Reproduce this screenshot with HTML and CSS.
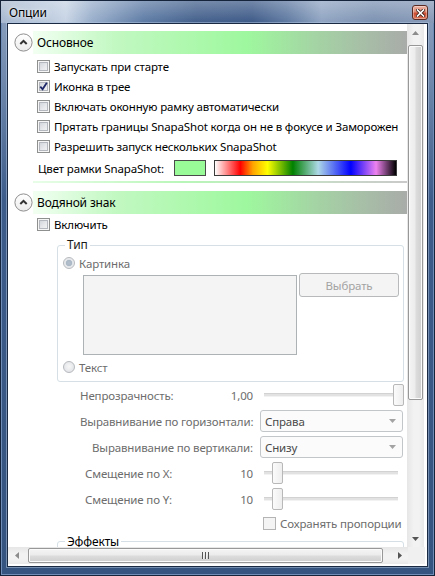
FILE: index.html
```html
<!DOCTYPE html>
<html>
<head>
<meta charset="utf-8">
<link rel="stylesheet" href="styles.css">
</head>
<body>
<div class="window">
  <div class="titlebar">
    <span class="title">Опции</span>
    <div class="close">
      <svg width="9" height="8" viewBox="0 0 9 8"><path d="M1.5 1L7.5 7M7.5 1L1.5 7" stroke="#3a1a14" stroke-width="3.2" stroke-linecap="square"/><path d="M1.5 1L7.5 7M7.5 1L1.5 7" stroke="#fff" stroke-width="1.7" stroke-linecap="square"/></svg>
    </div>
  </div>
  <div class="client">
    <div class="main">
      <div class="viewport">
        <div class="content">
          <div class="exp-header">
            <span class="toggle"><svg width="19" height="19" viewBox="0 0 19 19"><defs><linearGradient id="tg" x1="0" y1="0" x2="0" y2="1"><stop offset="0" stop-color="#ffffff"/><stop offset="1" stop-color="#ececec"/></linearGradient></defs><circle cx="9.5" cy="9.5" r="8.6" fill="url(#tg)" stroke="#8d8d8d" stroke-width="1"/><path d="M6.3 11L9.5 7.8L12.7 11" fill="none" stroke="#333" stroke-width="2"/></svg></span>
            <div class="band">Основное</div>
          </div>
          <div class="exp-body first">
            <div class="row"><span class="cb"></span><span>Запускать при старте</span></div>
            <div class="row"><span class="cb"><svg width="11" height="11" viewBox="0 0 11 11"><path d="M2.3 5.6L4.6 8.3L8.8 1.8" fill="none" stroke="#1f2868" stroke-width="1.8"/></svg></span><span>Иконка в трее</span></div>
            <div class="row"><span class="cb"></span><span>Включать оконную рамку автоматически</span></div>
            <div class="row"><span class="cb"></span><span>Прятать границы SnapaShot когда он не в фокусе и Заморожен</span></div>
            <div class="row"><span class="cb"></span><span>Разрешить запуск нескольких SnapaShot</span></div>
            <div class="color-row">
              <span class="color-lbl">Цвет рамки SnapaShot:</span>
              <span class="swatch"></span>
              <span class="spectrum"></span>
            </div>
          </div>
          <div class="sep"></div>
          <div class="exp-header second">
            <span class="toggle"><svg width="19" height="19" viewBox="0 0 19 19"><defs><linearGradient id="tg2" x1="0" y1="0" x2="0" y2="1"><stop offset="0" stop-color="#ffffff"/><stop offset="1" stop-color="#ececec"/></linearGradient></defs><circle cx="9.5" cy="9.5" r="8.6" fill="url(#tg2)" stroke="#8d8d8d" stroke-width="1"/><path d="M6.3 11L9.5 7.8L12.7 11" fill="none" stroke="#333" stroke-width="2"/></svg></span>
            <div class="band">Водяной знак</div>
          </div>
          <div class="exp-body">
            <div class="row"><span class="cb"></span><span>Включить</span></div>
            <fieldset class="group type-group">
              <legend>Тип</legend>
              <div class="radio-row disabled"><span class="rb checked"></span><span>Картинка</span></div>
              <div class="image-row">
                <div class="image-box"></div>
                <div class="btn">Выбрать</div>
              </div>
              <div class="radio-row disabled"><span class="rb"></span><span>Текст</span></div>
            </fieldset>
            <div class="props">
              <div class="prow">
                <div class="lbl-area"><span>Непрозрачность:</span><span>1,00</span></div>
                <div class="ctrl slider"><div class="track"></div><div class="thumb" style="left:133px"></div></div>
              </div>
              <div class="prow">
                <div class="lbl-area"><span>Выравнивание по горизонтали:</span></div>
                <div class="ctrl combo"><span>Справа</span><svg width="7" height="4" viewBox="0 0 7 4"><path d="M0 0H7L3.5 4Z" fill="#a3a3a3"/></svg></div>
              </div>
              <div class="prow">
                <div class="lbl-area end"><span>Выравнивание по вертикали:</span></div>
                <div class="ctrl combo"><span>Снизу</span><svg width="7" height="4" viewBox="0 0 7 4"><path d="M0 0H7L3.5 4Z" fill="#a3a3a3"/></svg></div>
              </div>
              <div class="prow">
                <div class="lbl-area inset"><span>Смещение по X:</span><span>10</span></div>
                <div class="ctrl slider"><div class="track"></div><div class="thumb" style="left:12px"></div></div>
              </div>
              <div class="prow">
                <div class="lbl-area inset"><span>Смещение по Y:</span><span>10</span></div>
                <div class="ctrl slider"><div class="track"></div><div class="thumb" style="left:12px"></div></div>
              </div>
              <div class="prow short">
                <div class="lbl-area"></div>
                <div class="ctrl keep"><span class="cb dis"></span><span>Сохранять пропорции</span></div>
              </div>
            </div>
            <fieldset class="group effects">
              <legend>Эффекты</legend>
            </fieldset>
          </div>
        </div>
      </div>
      <div class="vscroll">
        <div class="sbtn"><svg width="7" height="4" viewBox="0 0 7 4"><path d="M0 4H7L3.5 0Z" fill="#8c8c8c"/></svg></div>
        <div class="vtrack"><div class="vthumb"></div></div>
        <div class="sbtn"><svg width="7" height="4" viewBox="0 0 7 4"><path d="M0 0H7L3.5 4Z" fill="#555"/></svg></div>
      </div>
      <div class="rgap"></div>
    </div>
    <div class="hbar">
      <div class="hscroll">
        <div class="sbtn h"><svg width="4" height="7" viewBox="0 0 4 7"><path d="M4 0V7L0 3.5Z" fill="#8c8c8c"/></svg></div>
        <div class="htrack"><div class="hthumb"><span class="grip"></span></div></div>
        <div class="sbtn h"><svg width="4" height="7" viewBox="0 0 4 7"><path d="M0 0V7L4 3.5Z" fill="#555"/></svg></div>
      </div>
      <div class="corner"></div>
    </div>
  </div>
</div>
</body>
</html>
```

FILE: styles.css
```css
html, body {
  margin: 0;
  padding: 0;
}
body {
  width: 435px;
  height: 576px;
  overflow: hidden;
  font-family: "Noto Sans", "Open Sans", sans-serif;
  font-size: 11.5px;
  letter-spacing: -0.15px;
  color: #000;
}
.window {
  box-sizing: border-box;
  width: 435px;
  height: 576px;
  border: 1px solid #15243b;
  padding: 0 6px 8px 6px;
  display: flex;
  flex-direction: column;
  background: linear-gradient(to bottom, #90a4c1 0px, #6f88ac 80px, #3d5c8a 200px, #35547f 100%);
  box-shadow: inset 0 0 0 1px #6f8db7;
}
.titlebar {
  height: 22px;
  margin: 0 -6px;
  padding: 0 6px 0 7px;
  display: flex;
  justify-content: space-between;
  align-items: flex-start;
  background:
    linear-gradient(to bottom, rgba(255,255,255,0.28), rgba(255,255,255,0) 22px),
    linear-gradient(to right, #a5b7cf 0%, #b9c8dc 10%, #c6d3e4 15%, #97adca 21%, #5c7aa4 33%, #425f8b 45%, #3c5987 58%, #5d78a0 66%, #8ea3c1 74%, #7b91b1 86%, #8598b6 100%);
}
.title {
  font-size: 12px;
  line-height: 24px;
  padding-left: 1px;
  color: #000;
  text-shadow: 0 0 6px rgba(255,255,255,0.9), 0 0 2px rgba(255,255,255,0.7);
}
.close {
  margin-top: 4px;
  width: 16px;
  height: 15px;
  box-sizing: border-box;
  border: 1px solid #5b2a22;
  border-radius: 3px;
  background: linear-gradient(to bottom, #eeb5a6 0%, #e08b74 45%, #cc4d32 55%, #dd7456 100%);
  box-shadow: inset 0 0 0 1px rgba(255,255,255,0.35);
  display: flex;
  align-items: center;
  justify-content: center;
}
.client {
  flex: 1;
  border: 1px solid #1a2a42;
  background: #fff;
  display: flex;
  flex-direction: column;
  box-shadow: 0 0 0 1px rgba(180,200,225,0.5);
}
.main {
  display: flex;
  height: 523px;
}
.viewport {
  width: 400px;
  height: 523px;
  overflow: hidden;
}
.content {
  width: 400px;
  padding-top: 7px;
}
.exp-header {
  display: flex;
  align-items: center;
  height: 23px;
  padding-left: 6px;
}
.exp-header.second {
  margin-top: 8px;
}
.toggle {
  width: 19px;
  height: 19px;
  display: flex;
}
.band {
  flex: 1;
  height: 23px;
  line-height: 23px;
  padding-left: 4px;
  font-size: 12px;
  background: linear-gradient(to right, #f2fff2 0%, #c2f8c2 22%, #9ef89e 57%, #a4d4a4 75%, #a9aba9 100%);
  white-space: nowrap;
}
.exp-body.first {
  padding-top: 2px;
}
.row {
  display: flex;
  align-items: center;
  height: 20px;
  padding-left: 29px;
  gap: 4px;
  white-space: nowrap;
}
.cb {
  flex: none;
  box-sizing: border-box;
  width: 13px;
  height: 13px;
  border: 1px solid #8e8f8f;
  background: linear-gradient(135deg, #c9cdd3 0%, #e6e8eb 55%, #f7f7f7 100%);
  box-shadow: inset 0 0 0 1px #f6f6f6, inset 0 0 0 2px #b4b8be;
  display: flex;
  align-items: center;
  justify-content: center;
}
.cb.dis {
  border-color: #b4b4b4;
  background: #f4f4f4;
  box-shadow: none;
}
.color-row {
  display: flex;
  align-items: center;
  height: 24px;
  padding-left: 30px;
}
.color-lbl {
  flex: none;
  width: 128px;
  white-space: nowrap;
}
.swatch {
  flex: none;
  margin-left: 8px;
  box-sizing: border-box;
  width: 32px;
  height: 16px;
  border: 1px solid #4a4a4a;
  background: #98fb98;
}
.spectrum {
  flex: none;
  margin-left: 8px;
  box-sizing: border-box;
  width: 183px;
  height: 16px;
  border: 1px solid #3c3c3c;
  background: linear-gradient(to right, #ffffff 0%, #ff0000 14%, #ffa500 21%, #ffff00 29%, #008000 43%, #add8e6 57%, #0000ff 75%, #ee82ee 89%, #000000 100%);
}
.sep {
  margin: 1px 0 0 25px;
  height: 2px;
  background: linear-gradient(to right, #e8fde8 0%, #b8f6b8 40%, #c8dcc8 75%, #c9c9c9 100%);
}
.group {
  box-sizing: border-box;
  margin: 3px 0 0 49px;
  width: 347px;
  padding: 0 0 4px 5px;
  border: 1px solid #d5dfe5;
  border-radius: 3px;
  min-width: 0;
}
.group legend {
  padding: 0 2px;
  margin-left: 2px;
  line-height: 16px;
  font-size: 12px;
  color: #1a1a1a;
}
.radio-row {
  display: flex;
  align-items: center;
  height: 20px;
  gap: 4px;
}
.disabled {
  color: #6d6d6d;
}
.rb {
  flex: none;
  box-sizing: border-box;
  width: 12px;
  height: 12px;
  border-radius: 50%;
  border: 1px solid #b6b9bd;
  background: radial-gradient(circle at 50% 45%, #f7f7f7 0, #e3e5e8 70%, #d7dade 100%);
}
.rb.checked {
  background: radial-gradient(circle at 50% 50%, #b3bfcc 0, #aab7c5 2.8px, #e4e7ea 3.6px, #f2f2f2 100%);
}
.image-row {
  display: flex;
  align-items: flex-start;
  padding-left: 20px;
  gap: 2px;
}
.image-box {
  margin-top: 2px;
  box-sizing: border-box;
  width: 214px;
  height: 80px;
  border: 1px solid #adb2b5;
  background: #f4f4f4;
}
.btn {
  box-sizing: border-box;
  width: 100px;
  height: 24px;
  border: 1px solid #b7b9bb;
  border-radius: 3px;
  background: #f4f4f4;
  color: #a3a3a3;
  display: flex;
  align-items: center;
  justify-content: center;
}
.type-group .radio-row:last-child {
  margin-top: 2px;
}
.props {
  margin: 2px 0 0 72px;
  display: flex;
  flex-direction: column;
  gap: 4px;
}
.prow {
  display: flex;
  align-items: center;
  height: 22px;
  gap: 7px;
  color: #6d6d6d;
}
.prow.short {
  height: 18px;
}
.lbl-area {
  width: 173px;
  flex: none;
  display: flex;
  justify-content: space-between;
  white-space: nowrap;
}
.lbl-area.end {
  justify-content: flex-end;
}
.lbl-area.inset {
  padding-left: 5px;
  box-sizing: border-box;
}
.ctrl {
  flex: none;
  width: 143px;
  height: 22px;
  box-sizing: border-box;
}
.slider {
  position: relative;
  display: flex;
  align-items: center;
  padding: 0 5px 0 4px;
}
.track {
  flex: 1;
  height: 2px;
  background: #e2e2e2;
  border-top: 1px solid #d2d2d2;
  border-bottom: 1px solid #f2f2f2;
}
.thumb {
  position: absolute;
  top: 0;
  width: 11px;
  height: 22px;
  box-sizing: border-box;
  border: 1px solid #b8b8b8;
  border-radius: 2px;
  background: linear-gradient(to right, #fbfbfb, #eeeeee);
}
.combo {
  border: 1px solid #c3c6c9;
  border-radius: 3px;
  background: #fbfbfb;
  display: flex;
  align-items: center;
  justify-content: space-between;
  padding: 0 6px 0 4px;
  color: #4a4a4a;
}
.keep {
  height: 18px;
  display: flex;
  align-items: center;
  gap: 4px;
  padding-left: 3px;
  white-space: nowrap;
}
.effects {
  margin-top: 3px;
  height: 40px;
}
.effects legend {
  color: #000;
  line-height: 13px;
}
.vscroll {
  width: 17px;
  height: 523px;
  display: flex;
  flex-direction: column;
  background: linear-gradient(to right, #e6e6e6, #f2f2f2 40%, #f2f2f2 70%, #e8e8e8);
}
.sbtn {
  height: 17px;
  flex: none;
  display: flex;
  align-items: center;
  justify-content: center;
}
.sbtn.h {
  width: 17px;
  height: 17px;
}
.vtrack {
  flex: 1;
  padding: 4px 1px 0 1px;
}
.vthumb {
  box-sizing: border-box;
  height: 355px;
  border: 1px solid #989898;
  border-radius: 2px;
  background: linear-gradient(to right, #f4f4f4 0%, #ececec 45%, #dcdcdc 55%, #cfcfcf 100%);
  box-shadow: inset 0 0 0 1px #fbfbfb;
}
.rgap {
  width: 3px;
}
.hbar {
  display: flex;
  height: 17px;
}
.hscroll {
  width: 400px;
  display: flex;
  background: linear-gradient(to bottom, #e6e6e6, #f2f2f2 40%, #f2f2f2 70%, #e8e8e8);
}
.htrack {
  flex: 1;
  padding: 1px 0 1px 3px;
}
.hthumb {
  box-sizing: border-box;
  width: 355px;
  height: 15px;
  border: 1px solid #989898;
  border-radius: 2px;
  background: linear-gradient(to bottom, #f4f4f4 0%, #ececec 45%, #dcdcdc 55%, #cfcfcf 100%);
  box-shadow: inset 0 0 0 1px #fbfbfb;
  display: flex;
  align-items: center;
  justify-content: center;
}
.grip {
  width: 7px;
  height: 7px;
  background: repeating-linear-gradient(to right, #555 0 1px, #f0f0f0 1px 2px, transparent 2px 3px);
}
.corner {
  width: 17px;
  background: #f0f0f0;
}
```
